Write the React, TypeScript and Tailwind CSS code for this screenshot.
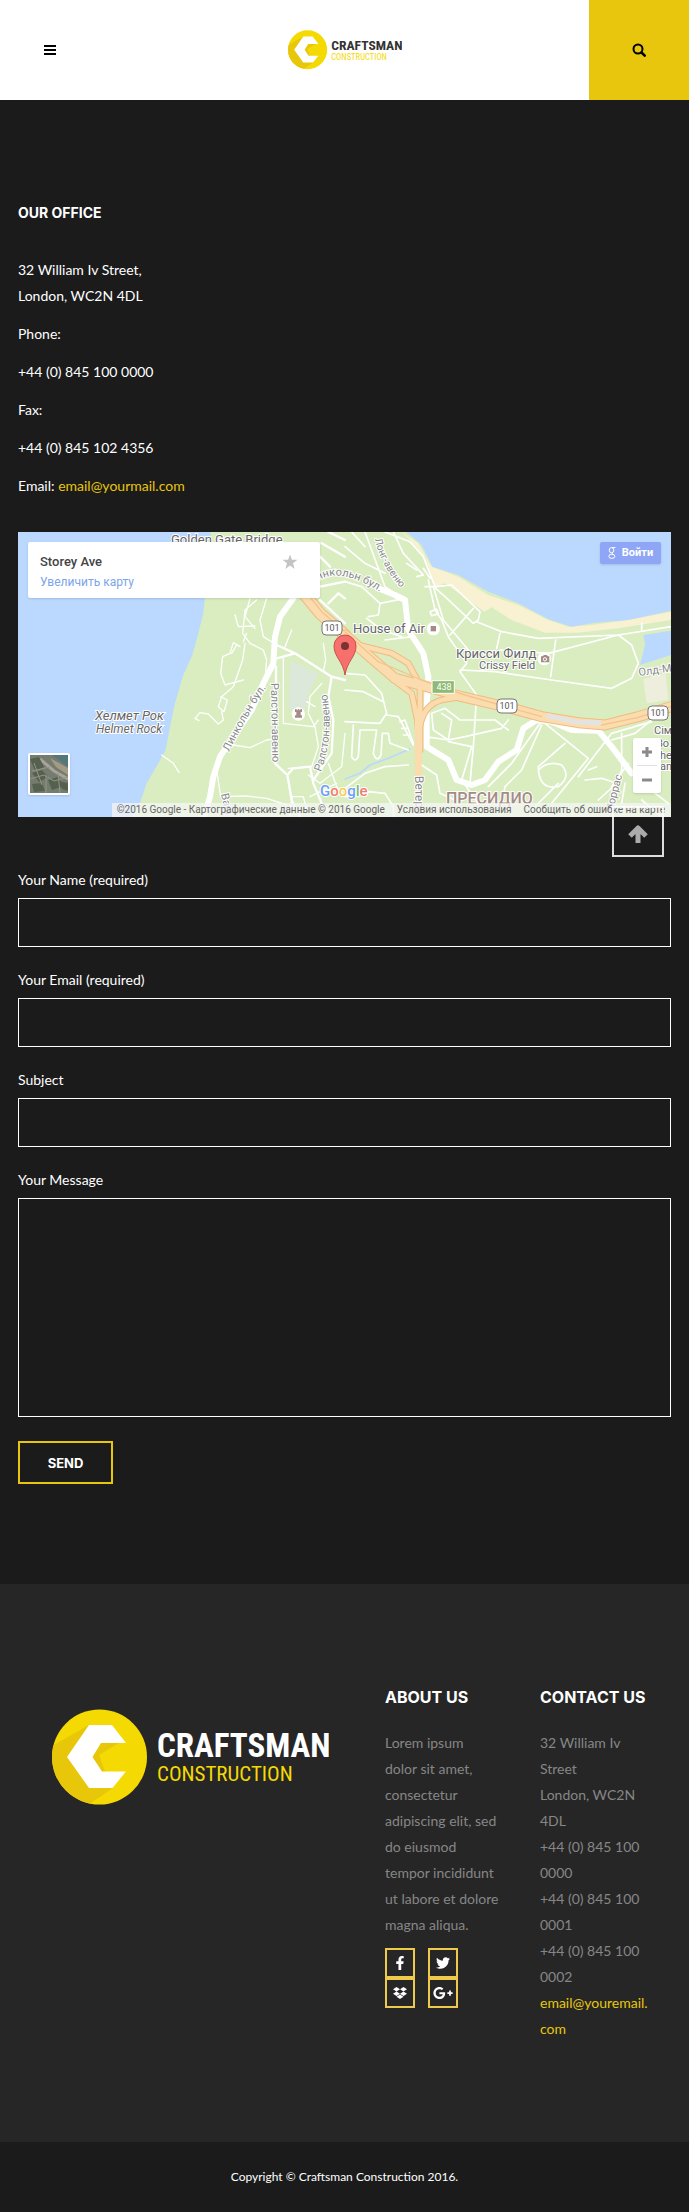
import { FaDropbox, FaFacebookF, FaGooglePlusG, FaTwitter } from 'react-icons/fa';

interface LogoProps {
  className: string;
  titleClass: string;
}

const Logo = ({ className, titleClass }: LogoProps) => (
  <svg className={className} viewBox="0 0 277 96" role="img" aria-label="Craftsman Construction">
    <defs>
      <clipPath id="logo-disc">
        <circle cx="47.5" cy="48" r="47.5" />
      </clipPath>
    </defs>
    <circle cx="47.5" cy="48" r="47.5" fill="#f4d902" />
    <g clipPath="url(#logo-disc)" fill="#e8c60a">
      <path d="M37 16 L0 37 V96 H36 L61 79 L52 60 Z" />
      <path d="M49 34 H67 L40 50 Z" />
    </g>
    <path d="M37 16 H60 L74 34 H49 L40.500 48 L50 62.500 H74 L60.500 79 H37 L15 48 Z" fill="#fff" />
    <text
      x="105"
      y="48"
      fontSize="33"
      className={titleClass}
      style={{ fontFamily: '"Roboto Condensed", "Liberation Sans Narrow", Roboto, sans-serif', fontWeight: 700 }}
    >
      CRAFTSMAN
    </text>
    <text
      x="105"
      y="72"
      fontSize="21"
      fill="#f4d902"
      style={{ fontFamily: '"Roboto Condensed", "Liberation Sans Narrow", Roboto, sans-serif' }}
    >
      CONSTRUCTION
    </text>
  </svg>
);

const RouteShield = ({ x, y }: { x: number; y: number }) => (
  <g>
    <rect x={x - 10} y={y - 7} width="20" height="14" rx="4" fill="#fff" stroke="#777" />
    <text x={x} y={y + 3} fontSize="9" fill="#555" textAnchor="middle">101</text>
  </g>
);

const MapDrawing = () => (
  <svg
    className="block h-full w-full"
    viewBox="0 0 653 285"
    preserveAspectRatio="xMidYMid slice"
    style={{ fontFamily: 'Roboto, sans-serif' }}
    aria-hidden="true"
  >
    <defs>
      <path id="lincoln-south" d="M211 220 Q232 178 252 150" />
      <path id="lincoln-north" d="M300 49 Q322 34 364 61" />
      <path id="ralston-east" d="M303 240 Q318 200 307 152" />
      <path id="long-avenue" d="M357 7 Q362 34 388 62" />
    </defs>
    <rect width="653" height="285" fill="#d9edc0" />

    {/* Western half */}
    <g transform="translate(-18 -12) scale(0.33333)" fill="none" strokeLinecap="round" strokeLinejoin="round">
      <path d="M54 36 H632 L618 200 L610 280 L595 340 L577 405 L548 470 L525 550 L510 620 L497 690 L472 735 L440 790 L418 855 L395 891 H54 Z" fill="#bbd8ff" />
      <path d="M872 422 L955 462 L925 520 L915 570 L865 568 Z" fill="#dce8da" />
      <g stroke="#fff" strokeWidth="4">
        <path d="M750 235 L735 290 L765 325 M770 240 L735 270 L728 340 L750 370 L790 390 L800 420 L795 480" />
        <path d="M800 235 L780 300 L790 350 L830 375 M705 285 L715 320 L765 318 M720 380 L700 368 L690 400 L668 410 L662 460 L675 495 L730 480 M710 375 L695 400" />
        <path d="M730 365 L740 340 M735 370 L728 420 L700 500 L665 530 L655 560 L672 575 L682 540 L662 530 M665 575 L670 600 L655 612 L625 582 L600 578 L585 595 L597 602" />
        <path d="M485 705 L520 730 L537 757 M700 675 L750 683 L800 660 L835 655 M850 415 V610 L940 620 L955 600" />
        <path d="M970 370 L977 420 L970 455 M875 330 L855 380 M965 490 L930 530 L925 580 L945 620 L955 680 L935 740 L865 745 M920 545 L945 560" />
        <path d="M650 750 L662 830 L740 828 L800 835 L860 855 M870 890 L875 830 L910 830 L920 870 M985 730 L1010 800 L1035 830 M930 830 L1010 790" />
        <path d="M1035 640 L1025 740 L960 790 L925 765" />
      </g>
      <g stroke="#fff" strokeWidth="7">
        <path d="M830 375 L885 400 L995 470 L985 530 L1000 600 L995 700 L940 780 M885 400 L830 415 M995 470 L1035 480" />
        <path d="M828 440 L828 610 L825 730 L862 765 L875 840 L900 890 M862 765 L880 745 L930 740 L940 790 L965 850 L1000 890" />
        <path d="M960 200 L1035 185 M960 240 L1035 310 M985 250 L1015 220 L1035 235 M965 70 L1035 110 M985 36 L1035 60 M990 140 L960 110" />
      </g>
      <path d="M880 235 L840 290 L825 350 L820 430 L790 490 L755 570 L700 650 L660 710 L640 770 L630 830 L612 891" stroke="#fff" strokeWidth="18" />
      <path d="M915 225 L960 280 L1035 345" stroke="#f0bb80" strokeWidth="37" />
      <path d="M915 225 L960 280 L1035 345" stroke="#fbdcae" strokeWidth="31" />
      <path d="M925 225 L965 275 L1035 335" stroke="#f4c48c" strokeWidth="4" />
      <circle cx="895" cy="582" r="20" fill="#fff" />
      <path d="M885 567 h5 v4 h3 v-4 h5 v4 h3 v-4 h5 v9 h-4 v10 h4 v7 H885 v-7 h4 v-10 h-4 Z" fill="#a58b86" />
    </g>

    {/* Eastern half */}
    <g transform="translate(327 -12) scale(0.33333)" fill="none" strokeLinecap="round" strokeLinejoin="round">
      <path d="M170 36 L220 70 L260 140 L340 170 L430 225 L520 255 L610 300 L670 320 L740 315 L850 300 L978 275 V300 L820 325 L700 338 L600 338 L500 300 L440 262 L418 275 L350 225 L300 190 L270 200 L240 110 L195 60 Z" fill="#f8f1d2" />
      <path d="M185 36 L230 75 L262 140 L340 165 L430 215 L520 250 L610 298 L680 320 L750 308 L850 300 L978 272 V36 Z" fill="#bbd8ff" />
      <path d="M978 332 L895 345 L900 375 L885 435 L978 405 Z" fill="#bbd8ff" />
      <path d="M895 477 L962 462 L970 540 L905 550 Z" fill="#eeeedd" />
      <path d="M0 777 L45 760 L75 735 L130 715 L195 687" stroke="#bbd8ff" strokeWidth="5" />
      <g stroke="#fff" strokeWidth="5">
        <path d="M120 36 L195 65 L235 110 L270 200 L320 195 L405 275 L400 300 L385 310 L300 230 L272 205 M145 36 L175 100 L235 165 L215 170 M235 145 L255 175" />
        <path d="M275 200 L240 200 M250 180 L270 270 L290 300 L310 350 L365 430 L345 455 L395 525 L385 680 L375 790" />
        <path d="M265 200 L295 300 L370 390 M315 345 L385 265 M395 305 L470 335 L580 355 L820 345 L978 320 M820 345 L610 400 L465 390 M465 340 L455 385 M632 360 L617 470" />
        <path d="M345 450 L450 455 L620 480 L800 505 L860 475 L880 430 L860 375 L820 345 M890 310 V330 M255 275 l20 -8 5 15 -20 5 z" />
        <path d="M0 460 L60 465 L110 520 L125 580 L105 610 L0 605 M0 510 L55 515 L115 545 M125 585 L160 590 L205 675" />
        <path d="M165 605 L180 600 L205 670 M170 625 H190 M175 645 H195 M25 615 L20 710 Q30 730 40 710 L45 630 H95 L85 700 Q95 730 108 705 L112 640 H130 L135 670 L190 690" />
        <path d="M0 805 L60 760 L120 740 L190 735 M0 830 L70 815 L120 820 L145 860 V891" />
        <path d="M260 580 L300 565 L345 600 L450 600 L490 630 M240 650 L310 660 L360 650 L470 625 L490 600 M310 660 L320 600 L290 580 M260 580 L265 630 L310 660 M310 665 L380 680" />
        <path d="M230 735 L275 765 L285 820 L330 840 M380 680 L350 780 L400 850 M590 615 L530 750 L480 800 L470 850 M585 610 L500 730 L430 800" />
        <path d="M600 610 L730 715 L620 850 M660 670 L580 740 Q580 810 640 800 Q680 770 650 735 Q610 720 580 750 M700 770 L800 640 L920 605 M720 780 L770 775 L815 790 L760 840 M560 870 L640 790" />
        <path d="M830 640 V750 L800 840 M800 660 L870 640 L920 600 M850 730 L800 800 M905 800 L970 850 M890 840 L950 891 M840 790 L830 850 M730 750 L755 740" />
        <path d="M0 80 L60 130 L120 160 M0 185 L50 200 L105 250 L180 235 M105 250 L100 285 L70 290 M65 295 L110 330 L170 350 M20 36 L60 80 M60 36 L120 200 L180 240 M185 130 L215 150 M120 360 L200 350" />
      </g>
      <path d="M100 205 L150 225 L180 240 L190 330 L235 400 L250 470 L245 560 L245 680 L310 720 L335 780 L380 795 L420 780 L460 725 L515 690 L535 625 L575 600 L620 605 L680 630 L760 632 L800 680 L860 760" stroke="#fff" strokeWidth="18" />
      <g stroke="#f0bb80">
        <path d="M0 345 L80 415 L150 475 L245 500 L350 530 L500 565 L590 590 L700 608 L780 615 L880 590 L978 560" strokeWidth="33" />
        <path d="M40 375 L140 400 L190 430 L225 495 M140 475 L200 520 L217 600 L225 690 M225 490 V690 M225 620 Q235 555 290 540 L350 530" strokeWidth="20" />
      </g>
      <g stroke="#fbdcae">
        <path d="M0 345 L80 415 L150 475 L245 500 L350 530 L500 565 L590 590 L700 608 L780 615 L880 590 L978 560" strokeWidth="27" />
        <path d="M40 375 L140 400 L190 430 L225 495 M140 475 L200 520 L217 600 L225 690 M225 490 V690 M225 620 Q235 555 290 540 L350 530" strokeWidth="14" />
        <path d="M220 600 V870" strokeWidth="21" />
      </g>
      <path d="M0 335 L100 425 L230 480 L360 525 L590 590 M770 615 L880 592 L978 560" stroke="#f4c48c" strokeWidth="4" />
      <path d="M605 587 L690 605 L768 608" stroke="#e3e3e1" strokeWidth="15" strokeLinecap="butt" />
      <circle cx="265" cy="326" r="20" fill="#fff" />
      <path d="M257 318 h16 v16 h-16 z" fill="#a58b86" />
      <circle cx="598" cy="416" r="20" fill="#fff" />
      <path d="M588 409 h5 l4 -4 h8 l4 4 h4 v18 h-25 z" fill="#a58b86" />
      <circle cx="600" cy="418" r="5" stroke="#fff" strokeWidth="3" />
      <path d="M262 482 H328 V520 H262 Z" fill="#8fba74" stroke="#fff" strokeWidth="3" />
    </g>

    <g fill="#666" stroke="#fff" strokeWidth="2" paintOrder="stroke" fontSize="11">
      <text x="153" y="12" fontSize="13">Golden Gate Bridge</text>
      <text x="335" y="101" fontSize="13">House of Air</text>
      <text x="438" y="126" fontSize="13">Крисси Филд</text>
      <text x="461" y="137">Crissy Field</text>
      <text x="77" y="188" fontSize="13" fontStyle="italic">Хелмет Рок</text>
      <text x="78" y="201" fontSize="12" fontStyle="italic">Helmet Rock</text>
      <text x="636" y="202">Сім</text>
      <text x="638" y="215">Во.</text>
      <text x="642" y="227">he</text>
      <text x="642" y="238">an</text>
    </g>
    <g fill="#888" stroke="#fff" strokeWidth="2" paintOrder="stroke" fontSize="11">
      <text><textPath href="#lincoln-south">Линкольн бул.</textPath></text>
      <text><textPath href="#lincoln-north">инкольн бул.</textPath></text>
      <text><textPath href="#ralston-east">Ралстон-авеню</textPath></text>
      <text fontSize="10"><textPath href="#long-avenue">Лонг-авеню</textPath></text>
      <text transform="translate(253 151) rotate(89)">Ралстон-авеню</text>
      <text transform="translate(203 262) rotate(78)">Ваш</text>
      <text transform="translate(397 244) rotate(89)" fontSize="12">Ветера</text>
      <text transform="translate(594 282) rotate(-75)">Моррас</text>
      <text transform="translate(621 144) rotate(-8)">Олд-М</text>
    </g>
    <text x="428" y="272" fontSize="16" fontWeight="500" fill="#a58b86" stroke="#fff" strokeWidth="2" paintOrder="stroke">ПРЕСИДИО</text>
    <text x="426" y="158" fontSize="9" fill="#fff" textAnchor="middle">438</text>
    <RouteShield x={314} y={96} />
    <RouteShield x={489} y={174} />
    <RouteShield x={640} y={181} />

    {/* Marker */}
    <path d="M327 143 C325 129 316 125 316 114 A11 11 0 0 1 338 114 C338 125 329 129 327 143 Z" fill="#f7706d" stroke="#c9504b" />
    <circle cx="327" cy="114" r="4" fill="#7b3331" />

    <text x="302" y="264" fontSize="15" fontWeight="500" stroke="#fff" strokeWidth="2" paintOrder="stroke">
      <tspan fill="#6e9ff5">G</tspan><tspan fill="#ef7c72">o</tspan><tspan fill="#f8cd5a">o</tspan><tspan fill="#6e9ff5">g</tspan><tspan fill="#71bd84">l</tspan><tspan fill="#ef7c72">e</tspan>
    </text>
  </svg>
);

const OfficeMap = () => (
  <div className="relative mt-[33px] h-[285px] font-[Roboto,sans-serif]">
    <div className="h-full overflow-hidden">
      <MapDrawing />
    </div>

    <div className="absolute left-[10px] top-[10px] flex h-14 w-[292px] justify-between rounded-xs bg-white px-3 pt-2.5 shadow">
      <div>
        <p className="text-[13px] leading-5 font-medium text-[#444]">Storey Ave</p>
        <a href="#map" className="block text-[12px] leading-5 text-[#7ba5ea]">Увеличить карту</a>
      </div>
      <button type="button" aria-label="Save place" className="mr-2.5 flex h-5 items-center">
        <svg className="h-4 w-4" viewBox="0 0 16 16">
          <path d="M8 0.500 L9.900 5.800 H15.500 L11 9.200 L12.700 15 L8 11.500 L3.300 15 L5 9.200 L0.500 5.800 H6.100 Z" fill="#c4c4c4" />
        </svg>
      </button>
    </div>

    <button type="button" className="absolute right-[10px] top-[10px] flex h-[22px] w-[61px] items-center justify-center gap-1.5 rounded-xs bg-[#8ea6f5] text-[11px] font-bold text-white shadow">
      <svg className="h-3 w-2" viewBox="0 0 8 12" fill="none" stroke="currentColor">
        <ellipse cx="3.500" cy="3.200" rx="2.300" ry="2.600" />
        <path d="M4 0.600 H7.500 M4.500 5.500 Q3 6.500 5 7.500" />
        <ellipse cx="3.800" cy="9.300" rx="3" ry="2.100" />
      </svg>
      Войти
    </button>

    <button type="button" aria-label="Satellite view" className="absolute bottom-[22px] left-[10px] h-[42px] w-[42px] overflow-hidden rounded-xs border-2 border-white shadow">
      <svg className="h-full w-full" viewBox="0 0 38 38" fill="none">
        <rect width="38" height="38" fill="#747c70" />
        <path d="M22 0 H38 V12 Z" fill="#54777a" />
        <path d="M20 3 L38 13 V20 L26 12 Z" fill="#a39a86" />
        <path d="M10 4 L24 16 L38 24" stroke="#a9a39c" strokeWidth="3" />
        <path d="M0 4 L9 2 L14 12 L5 16 Z M2 18 L12 15 L18 22 L9 27 Z M18 25 L28 22 L34 31 L22 35 Z M2 29 L12 28 L15 36 L4 37 Z M28 26 L38 28 V36 L32 34 Z" fill="#56604f" />
        <path d="M0 24 L14 20 L24 26 L38 22 M16 20 V38 M28 18 L30 38 M4 8 L12 30 M2 16 L20 12" stroke="#939586" />
      </svg>
    </button>

    <div className="absolute bottom-6 right-[10px] flex h-[55px] w-7 flex-col items-center rounded-xs bg-white text-[#8a8a8a] shadow">
      <button type="button" aria-label="Zoom in" className="flex w-full flex-1 items-center justify-center">
        <svg className="h-3 w-3" viewBox="0 0 12 12"><path d="M6 1 V11 M1 6 H11" stroke="currentColor" strokeWidth="3" /></svg>
      </button>
      <span className="h-px w-5 bg-[#e2e2e2]" />
      <button type="button" aria-label="Zoom out" className="flex w-full flex-1 items-center justify-center">
        <svg className="h-3 w-3" viewBox="0 0 12 12"><path d="M1 6 H11" stroke="currentColor" strokeWidth="3" /></svg>
      </button>
    </div>

    <div className="absolute bottom-0 right-0 flex h-[14px] items-center gap-3 bg-[#f5f5f5]/75 pl-[5px] pr-1.5 text-[10px] leading-4 whitespace-nowrap text-[#666]">
      <span>©2016 Google - Картографические данные © 2016 Google</span>
      <a href="#terms">Условия использования</a>
      <a href="#report">Сообщить об ошибке на карте</a>
    </div>

    <a href="#top" aria-label="Back to top" className="absolute -bottom-10 right-[7px] flex h-[51px] w-[52px] items-center justify-center border-2 border-white/85 pt-1">
      <svg className="h-5 w-5" viewBox="0 0 20 20" fill="none" stroke="#ababab" strokeWidth="5">
        <path d="M2 12 L10 4 L18 12 M10 5 V19" strokeLinejoin="round" />
      </svg>
    </a>
  </div>
);

const fields = [
  { id: 'name', label: 'Your Name (required)', type: 'text' },
  { id: 'email', label: 'Your Email (required)', type: 'email' },
  { id: 'subject', label: 'Subject', type: 'text' },
];

const ContactForm = () => (
  <form className="mt-[50px]">
    {fields.map(field => (
      <div key={field.id} className="mb-5">
        <label htmlFor={field.id} className="mb-[5px] block">{field.label}</label>
        <input id={field.id} type={field.type} className="block h-[49px] w-full border border-white bg-transparent px-4" />
      </div>
    ))}
    <label htmlFor="message" className="mb-[5px] block">Your Message</label>
    <textarea id="message" className="block h-[219px] w-full resize-none border border-white bg-transparent p-4" />
    <button type="submit" className="mt-6 block h-[43px] w-[95px] border-2 border-[#e8c60d] font-[Inter,sans-serif] text-[13px] font-bold">
      SEND
    </button>
  </form>
);

const socials = [
  { name: 'Facebook', Icon: FaFacebookF },
  { name: 'Twitter', Icon: FaTwitter },
  { name: 'Dropbox', Icon: FaDropbox },
  { name: 'Google Plus', Icon: FaGooglePlusG },
];

const Footer = () => (
  <footer>
    <div className="grid grid-cols-[minmax(0,1fr)_120px_120px] gap-[35px] bg-[#262626] pt-[100px] pr-[29px] pb-[100px] pl-[52px] text-[#868686]">
      <div className="pt-[25px]">
        <Logo className="h-auto w-[277px]" titleClass="fill-white" />
      </div>
      <div>
        <h2 className="mb-5 font-[Inter,sans-serif] text-[16px] leading-[26px] font-bold whitespace-nowrap text-white">ABOUT US</h2>
        <p>
          Lorem ipsum<br />dolor sit amet,<br />consectetur<br />adipiscing elit, sed<br />
          do eiusmod<br />tempor incididunt<br />ut labore et dolore<br />magna aliqua.
        </p>
        <div className="mt-[10px] grid w-fit grid-cols-2 gap-x-[13px]">
          {socials.map(({ name, Icon }) => (
            <a key={name} href="#social" aria-label={name} className="flex h-[30px] w-[30px] items-center justify-center border-2 border-[#efc94c] text-white">
              <Icon className={name === 'Google Plus' ? 'h-5 w-5' : 'h-[14px] w-[14px]'} />
            </a>
          ))}
        </div>
      </div>
      <div>
        <h2 className="mb-5 font-[Inter,sans-serif] text-[16px] leading-[26px] font-bold whitespace-nowrap text-white">CONTACT US</h2>
        <p>
          32 William Iv<br />Street<br />
          London, WC2N<br />4DL<br />
          +44 (0) 845 100<br />0000<br />
          +44 (0) 845 100<br />0001<br />
          +44 (0) 845 100<br />0002<br />
          <a href="mailto:email@youremail.com" className="text-[#e8c60d]">email@youremail.<br />com</a>
        </p>
      </div>
    </div>
    <div className="flex h-[70px] items-center justify-center text-[12px]">
      Copyright © Craftsman Construction 2016.
    </div>
  </footer>
);

const App = () => (
  <div id="top" className="bg-[#1b1b1b] font-[Lato,sans-serif] text-[14px] leading-[26px] text-white">
    <header className="flex h-[100px] items-center justify-between bg-white text-black">
      <button type="button" aria-label="Menu" className="flex h-full w-[100px] items-center justify-center">
        <svg className="h-3 w-3" viewBox="0 0 12 12" stroke="currentColor" strokeWidth="2">
          <path d="M0 2 H12 M0 6 H12 M0 10 H12" />
        </svg>
      </button>
      <a href="#top">
        <Logo className="h-auto w-[114px]" titleClass="fill-[#333333]" />
      </a>
      <button type="button" aria-label="Search" className="flex h-full w-[100px] items-center justify-center bg-[#e8c60d]">
        <svg className="h-[14px] w-[14px]" viewBox="0 0 14 14" fill="none" stroke="currentColor" strokeWidth="2" strokeLinecap="round">
          <circle cx="6" cy="6" r="4.500" />
          <path d="M9.500 9.500 L12.700 12.700" strokeWidth="2.500" />
        </svg>
      </button>
    </header>

    <main className="px-[18px] py-[100px]">
      <h1 className="mb-[31px] font-[Inter,sans-serif] text-[14px] leading-[26px] font-bold">OUR OFFICE</h1>
      <address className="flex flex-col gap-3 not-italic">
        <p>32 William Iv Street,<br />London, WC2N 4DL</p>
        <p>Phone:</p>
        <p>+44 (0) 845 100 0000</p>
        <p>Fax:</p>
        <p>+44 (0) 845 102 4356</p>
        <p>Email: <a href="mailto:email@yourmail.com" className="text-[#e8c60d]">email@yourmail.com</a></p>
      </address>
      <OfficeMap />
      <ContactForm />
    </main>

    <Footer />
  </div>
);

export default App;
